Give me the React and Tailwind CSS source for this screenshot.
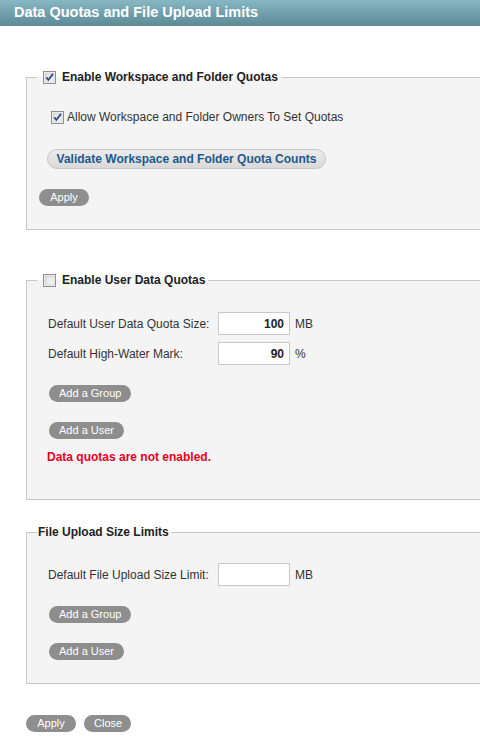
const Check = ({ checked }) => (
  <svg width="13" height="13" viewBox="0 0 13 13" className="shrink-0">
    <defs>
      <linearGradient id="cbg" x1="0" y1="0" x2="1" y2="1">
        <stop offset="0" stopColor="#dcdcdc" />
        <stop offset="1" stopColor="#fbfbfb" />
      </linearGradient>
    </defs>
    <rect x="0.5" y="0.5" width="12" height="12" fill="#fff" stroke="#8f8f8f" />
    <rect x="2" y="2" width="9" height="9" fill="url(#cbg)" stroke="#c9c9c9" strokeWidth="0.8" />
    {checked && (
      <path d="M3.2 6.3 L5.4 8.8 L10 2.8" fill="none" stroke="#3b4f8e" strokeWidth="1.9" />
    )}
  </svg>
);

const GreyBtn = ({ children, className = "" }) => (
  <button className={"h-[17px] rounded-full bg-[#8e8e8e] px-[10px] text-[11px] leading-[17px] text-white " + className}>
    {children}
  </button>
);

const Field = ({ label, value, unit }) => (
  <div className="flex items-center">
    <span className="w-[170px]">{label}</span>
    <input
      readOnly
      value={value}
      className="h-[23px] w-[72px] border border-[#c9c9c9] bg-white pr-[5px] text-right font-bold text-[#222] outline-none"
    />
    <span className="ml-[5px]">{unit}</span>
  </div>
);

export default function App() {
  return (
    <div className="min-h-[746px] w-[480px] overflow-hidden bg-white font-['Liberation_Sans',Arial,sans-serif] text-[12px] text-[#333]">
      <div className="flex h-[26px] items-center bg-gradient-to-b from-[#86b7c3] to-[#5d8a95] pl-[14px] text-[14.5px] font-bold text-white">
        Data Quotas and File Upload Limits
      </div>

      <div className="pl-[26px]">
        {/* Workspace quotas */}
        <fieldset className="-mr-[20px] mt-[43px] border border-[#c8c8c8] bg-[#f4f4f4] pb-[23px] pl-[12px]">
          <legend className="-ml-[2px] flex h-[16px] items-center pl-[6px] pr-[3px] font-bold text-[#222]">
            <Check checked />
            <span className="ml-[6px]">Enable Workspace and Folder Quotas</span>
          </legend>
          <div className="ml-[12px] mt-[24px] flex h-[16px] items-center">
            <Check checked />
            <span className="ml-[3px]">Allow Workspace and Folder Owners To Set Quotas</span>
          </div>
          <button className="ml-[8px] mt-[24px] block h-[20px] w-[279px] rounded-full border border-[#c6c6c6] bg-gradient-to-b from-[#ececec] to-[#d9d9d9] font-bold text-[#1d5a8c]">
            Validate Workspace and Folder Quota Counts
          </button>
          <GreyBtn className="mt-[20px] block w-[50px] px-0">Apply</GreyBtn>
        </fieldset>

        {/* User data quotas */}
        <fieldset className="-mr-[20px] mt-[42px] border border-[#c8c8c8] bg-[#f4f4f4] pb-[33px] pl-[12px]">
          <legend className="-ml-[2px] flex h-[16px] items-center pl-[6px] pr-[3px] font-bold text-[#222]">
            <Check />
            <span className="ml-[6px]">Enable User Data Quotas</span>
          </legend>
          <div className="ml-[9px] mt-[24px] flex flex-col gap-[7px]">
            <Field label="Default User Data Quota Size:" value="100" unit="MB" />
            <Field label="Default High-Water Mark:" value="90" unit="%" />
          </div>
          <GreyBtn className="ml-[10px] mt-[20px] block">Add a Group</GreyBtn>
          <GreyBtn className="ml-[10px] mt-[20px] block">Add a User</GreyBtn>
          <div className="ml-[8px] mt-[9px] font-bold text-[#e8001c]">Data quotas are not enabled.</div>
        </fieldset>

        {/* Upload limits */}
        <fieldset className="-mr-[20px] mt-[24px] border border-[#c8c8c8] bg-[#f4f4f4] pb-[23px] pl-[12px]">
          <legend className="-ml-[1px] flex h-[16px] items-center pr-[2px] font-bold text-[#222]">
            File Upload Size Limits
          </legend>
          <div className="ml-[9px] mt-[23px]">
            <Field label="Default File Upload Size Limit:" value="" unit="MB" />
          </div>
          <GreyBtn className="ml-[10px] mt-[20px] block">Add a Group</GreyBtn>
          <GreyBtn className="ml-[10px] mt-[20px] block">Add a User</GreyBtn>
        </fieldset>

        <div className="mt-[31px] flex gap-[8px] pb-[15px]">
          <GreyBtn className="w-[50px] px-0">Apply</GreyBtn>
          <GreyBtn className="w-[47px] px-0">Close</GreyBtn>
        </div>
      </div>
    </div>
  );
}
